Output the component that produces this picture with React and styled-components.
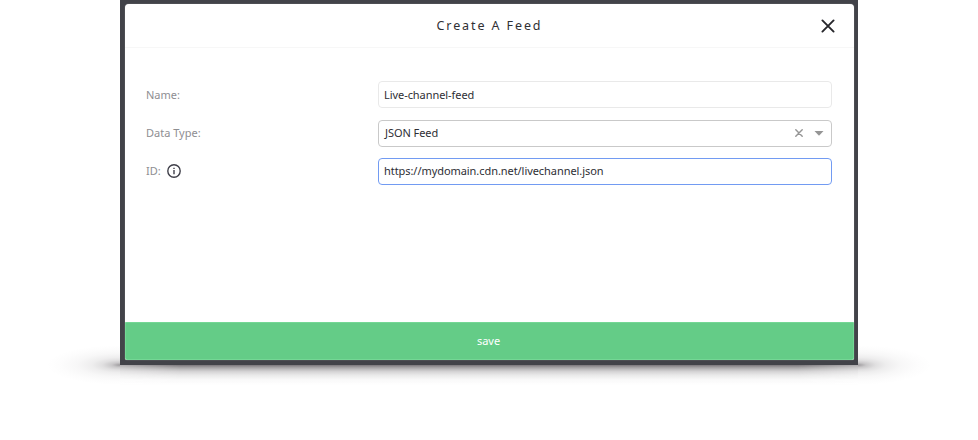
import React from "react";
import styled, { createGlobalStyle } from "styled-components";

const GlobalStyle = createGlobalStyle`
  * { box-sizing: border-box; }
  body {
    margin: 0;
    background: #fff;
    overflow: hidden;
    font-family: "Noto Sans", "Open Sans", sans-serif;
  }
`;

const Page = styled.main`
  display: flex;
  justify-content: center;
  height: 440px;
  background: #fff;
`;

const Backdrop = styled.div`
  position: relative;
  width: 738px;
  height: 365px;
  padding: 4px 4px 5px 5px;
  background: #424349;
`;

const edgeStops = `
  rgba(40, 34, 40, 0.45) 0%,
  rgba(40, 34, 40, 0.25) 11%,
  rgba(40, 34, 40, 0.14) 24%,
  rgba(40, 34, 40, 0.08) 38%,
  rgba(40, 34, 40, 0.035) 58%,
  rgba(40, 34, 40, 0.012) 80%,
  rgba(40, 34, 40, 0) 100%
`;

const baseStops = `
  rgba(40, 34, 40, 0.62) 0%,
  rgba(40, 34, 40, 0.44) 11%,
  rgba(40, 34, 40, 0.3) 22%,
  rgba(40, 34, 40, 0.2) 33%,
  rgba(40, 34, 40, 0.1) 50%,
  rgba(40, 34, 40, 0.03) 72%,
  rgba(40, 34, 40, 0) 100%
`;

const EdgeShadow = styled.div`
  position: absolute;
  z-index: -1;
  left: -74px;
  right: -74px;
  bottom: -20px;
  height: 40px;
  background:
    radial-gradient(74px 20px at 100% 50%, ${edgeStops}) left top / 74px 40px no-repeat,
    radial-gradient(74px 20px at 0% 50%, ${edgeStops}) right top / 74px 40px no-repeat;
`;

const BaseShadow = styled.div`
  position: absolute;
  z-index: -1;
  left: 0;
  right: 0;
  bottom: -20px;
  height: 20px;
  background: linear-gradient(${baseStops});
  mask-image: linear-gradient(to right, rgba(0, 0, 0, 0.6), #000 60px, #000 calc(100% - 60px), rgba(0, 0, 0, 0.6));
`;

const Stage = styled.div`
  position: relative;
  z-index: 0;
  height: 365px;
`;

const Dialog = styled.section`
  display: flex;
  flex-direction: column;
  height: 100%;
  overflow: hidden;
  border-radius: 4px 4px 2px 2px;
  background: #fff;
  box-shadow: 0 0 1px rgba(255, 255, 255, 0.6);
`;

const Header = styled.header`
  display: grid;
  grid-template-columns: 48px 1fr 48px;
  align-items: center;
  height: 44px;
  border-bottom: 1px solid #f7f7f7;
`;

const Title = styled.h1`
  grid-column: 2;
  margin: 0;
  font-size: 12.5px;
  line-height: 20px;
  font-weight: 400;
  letter-spacing: 1.9px;
  text-align: center;
  color: #303034;
`;

const IconButton = styled.button`
  display: flex;
  padding: 0;
  border: 0;
  background: none;
  color: ${(p) => p.$color};
`;

const CloseButton = styled(IconButton)`
  margin: 1px 0 0 15px;
`;

const Form = styled.form`
  display: flex;
  flex: 1;
  flex-direction: column;
  gap: 11px;
  padding: 33px 23px 0 21px;
`;

const Row = styled.div`
  display: grid;
  grid-template-columns: 232px 1fr;
  align-items: center;
  height: 27.4px;
`;

const Label = styled.label`
  display: flex;
  align-items: center;
  gap: 6px;
  font-size: 11px;
  line-height: 18px;
  color: #8e8e92;
`;

const fieldColor = { plain: "#e9e9e9", select: "#c9c9c9", focused: "#729bf2" };

const Field = styled.div`
  display: flex;
  align-items: center;
  height: 27px;
  margin-right: -1px;
  padding: 0 7px 0 ${(p) => (p.$kind === "select" ? 6 : 5)}px;
  border: 1px solid ${(p) => fieldColor[p.$kind]};
  border-radius: 4px;
  background: #fff;
`;

const Value = styled.span`
  flex: 1;
  font-size: 11px;
  line-height: 18px;
  letter-spacing: -0.06px;
  color: #2e2e34;
`;

const SelectTools = styled.div`
  display: flex;
  align-items: center;
  gap: 11px;
  color: #959595;
`;

const SaveButton = styled.button`
  height: 38px;
  padding: 0 2px 0 0;
  border: 1px solid #74d795;
  border-radius: 0 0 2px 2px;
  background: #64cc87;
  color: #fff;
  font-family: inherit;
  font-size: 11px;
  line-height: 18px;
`;

const Cross = ({ size, stroke }) => (
  <svg width={size} height={size} viewBox="0 0 14 14" fill="none" stroke="currentColor" strokeWidth={stroke} strokeLinecap="round">
    <path d="M1.4 1.4 12.6 12.6M12.6 1.4 1.4 12.6" />
  </svg>
);

const InfoIcon = () => (
  <svg width="14" height="14" viewBox="0 0 14 14" fill="none" stroke="#3f3f49" strokeWidth="1.4">
    <circle cx="7" cy="7" r="6.2" />
    <path d="M7 6.1v4.2" />
    <path d="M7 3.8v1.3" />
  </svg>
);

const Caret = () => (
  <svg width="10" height="5" viewBox="0 0 10 5" fill="currentColor">
    <path d="M0.5 0h9L5 4.8z" />
  </svg>
);

export default function App() {
  return (
    <>
      <GlobalStyle />
      <Page>
        <Stage>
          <Backdrop>
            <Dialog>
              <Header>
                <Title>Create A Feed</Title>
                <CloseButton $color="#26262b" aria-label="Close">
                  <Cross size={14} stroke={1.9} />
                </CloseButton>
              </Header>
              <Form>
                <Row>
                  <Label>Name:</Label>
                  <Field $kind="plain"><Value>Live-channel-feed</Value></Field>
                </Row>
                <Row>
                  <Label>Data Type:</Label>
                  <Field $kind="select">
                    <Value>JSON Feed</Value>
                    <SelectTools>
                      <IconButton type="button" $color="#959595" aria-label="Clear">
                        <Cross size={8} stroke={2.5} />
                      </IconButton>
                      <Caret />
                    </SelectTools>
                  </Field>
                </Row>
                <Row>
                  <Label>ID:<InfoIcon /></Label>
                  <Field $kind="focused"><Value>https://mydomain.cdn.net/livechannel.json</Value></Field>
                </Row>
              </Form>
              <SaveButton>save</SaveButton>
            </Dialog>
          </Backdrop>
          <EdgeShadow />
          <BaseShadow />
        </Stage>
      </Page>
    </>
  );
}
